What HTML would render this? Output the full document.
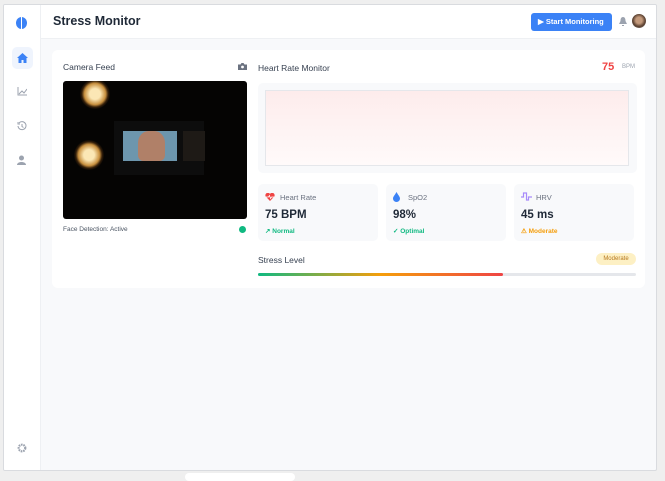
<!DOCTYPE html>
<html><head><style>
*{box-sizing:border-box;margin:0;padding:0}
body{width:665px;height:477px;background:#efefef;font-family:"Liberation Sans",sans-serif;position:relative;overflow:hidden;color:#1f2937}
.frame{position:absolute;left:3px;top:4px;width:654px;height:467px;background:#f8f9fb;border:1px solid #d9dbdf;border-radius:2px;overflow:hidden}
.side{position:absolute;left:0;top:0;width:37px;height:100%;background:#fff;border-right:1px solid #eef0f3}
.head{position:absolute;left:37px;top:0;right:0;height:34px;background:#fff;border-bottom:1px solid #eef0f3}
.card{position:absolute;left:48px;top:45px;width:593px;height:238px;background:#fff;border-radius:6px}
.t{position:absolute;font-size:8.5px;color:#374151}
.stat{position:absolute;top:134px;width:120px;height:57px;background:#f8f9fb;border-radius:5px}
.stat .l{position:absolute;left:22px;top:9px;font-size:7.5px;color:#6b7280}
.stat .v{position:absolute;left:7px;top:25px;font-size:11.5px;font-weight:bold;color:#1f2937}
.stat .s{position:absolute;left:7px;top:43px;font-size:6.5px;font-weight:bold}
</style></head><body>
<div class="frame">
 <div class="side">
  <div style="position:absolute;left:12px;top:12px;width:11px;height:12px;border-radius:50%;background:#3b82f6"></div>
  <div style="position:absolute;left:17px;top:12px;width:1px;height:12px;background:#fff"></div>
  <div style="position:absolute;left:8px;top:42px;width:21px;height:22px;border-radius:5px;background:#eff4fd"></div>
  <svg style="position:absolute;left:13px;top:48px" width="11" height="10" viewBox="0 0 11 10"><path d="M5.5 0L0 5h1.5v5h3V7h2v3h3V5H11z" fill="#3b82f6"/></svg>
  <svg style="position:absolute;left:13px;top:82px" width="10" height="9" viewBox="0 0 10 9"><path d="M1 0v8h9M2 7l3-3 2 2 3-4" stroke="#9ca3af" fill="none"/></svg>
  <svg style="position:absolute;left:13px;top:116px" width="10" height="10" viewBox="0 0 10 10"><path d="M2 2A4 4 0 1 1 1 5M1 1v2h2M5 3v2.5l1.5 1" stroke="#9ca3af" fill="none"/></svg>
  <svg style="position:absolute;left:13px;top:150px" width="9" height="10" viewBox="0 0 9 10"><circle cx="4.5" cy="3" r="2.5" fill="#9ca3af"/><path d="M0 10c0-4 9-4 9 0z" fill="#9ca3af"/></svg>
  <svg style="position:absolute;left:13px;top:438px" width="10" height="10" viewBox="0 0 10 10"><circle cx="5" cy="5" r="3.3" fill="none" stroke="#9ca3af" stroke-width="2.2" stroke-dasharray="1.6 0.8"/><circle cx="5" cy="5" r="1.2" fill="#fff"/></svg>
 </div>
 <div class="head">
  <div style="position:absolute;left:12px;top:9px;font-size:12.5px;font-weight:bold;color:#1f2937">Stress Monitor</div>
  <div style="position:absolute;left:490px;top:8px;width:81px;height:18px;background:#3b82f6;border-radius:3px;color:#fff;font-size:7.5px;font-weight:bold;line-height:18px;padding-left:7px">▶ Start Monitoring</div>
  <svg style="position:absolute;left:578px;top:12px" width="8" height="9" viewBox="0 0 8 9"><path d="M4 0C2 0 1.5 2 1.5 4L0 7h8L6.5 4C6.5 2 6 0 4 0zM3 8h2v1H3z" fill="#9ca3af"/></svg>
  <div style="position:absolute;left:591px;top:9px;width:14px;height:14px;border-radius:50%;background:radial-gradient(circle at 50% 45%,#c49a7c 30%,#5a4030 60%,#9a9a9a)"></div>
 </div>
 <div class="card">
  <div class="t" style="left:11px;top:12px">Camera Feed</div>
  <svg style="position:absolute;left:186px;top:13px" width="9" height="7" viewBox="0 0 9 7"><path d="M0 1.5h2.5L3.5 0h2l1 1.5H9V7H0z" fill="#6b7280"/><circle cx="4.5" cy="4" r="1.4" fill="#fff"/></svg>
  <div style="position:absolute;left:11px;top:31px;width:184px;height:138px;background:#050403;border-radius:3px;overflow:hidden">
   <div style="position:absolute;left:17px;top:-2px;width:30px;height:30px;border-radius:50%;background:radial-gradient(circle,#fbe7b5 25%,#c8903f 50%,rgba(120,70,20,.4) 62%,transparent 72%)"></div>
   <div style="position:absolute;left:11px;top:59px;width:30px;height:30px;border-radius:50%;background:radial-gradient(circle,#fbe7b5 25%,#c8903f 50%,rgba(120,70,20,.4) 62%,transparent 72%)"></div>
   <div style="position:absolute;left:51px;top:40px;width:90px;height:54px;background:#0d0d0d"></div>
   <div style="position:absolute;left:60px;top:50px;width:54px;height:30px;background:#6d96ad"></div>
   <div style="position:absolute;left:75px;top:50px;width:27px;height:30px;border-radius:40% 40% 20% 20%;background:#b08068"></div>
   <div style="position:absolute;left:120px;top:50px;width:22px;height:30px;background:#1e1a16"></div>
  </div>
  <div style="position:absolute;left:11px;top:176px;font-size:6.5px;color:#4b5563">Face Detection: Active</div>
  <div style="position:absolute;left:187px;top:176px;width:7px;height:7px;border-radius:50%;background:#10b981"></div>

  <div class="t" style="left:206px;top:13px">Heart Rate Monitor</div>
  <div style="position:absolute;left:550px;top:11px;font-size:11px;font-weight:bold;color:#ef4444">75</div>
  <div style="position:absolute;left:570px;top:14px;font-size:6px;color:#9ca3af">BPM</div>
  <div style="position:absolute;left:206px;top:33px;width:379px;height:90px;background:#f8f9fb;border-radius:5px"></div>
  <div style="position:absolute;left:213px;top:40px;width:364px;height:76px;border:1px solid #e5e7eb;background:linear-gradient(#fdecec,#fffafa)"></div>

  <div class="stat" style="left:206px"><svg style="position:absolute;left:7px;top:9px" width="10" height="8" viewBox="0 0 10 8"><path d="M5 8L.7 3.5A2.3 2.3 0 0 1 5 1a2.3 2.3 0 0 1 4.3 2.5z" fill="#ef4444"/><path d="M1 4h2.5l1-1.5 1 3 1-1.5H9" stroke="#fff" stroke-width=".8" fill="none"/></svg><div class="l">Heart Rate</div><div class="v">75 BPM</div><div class="s" style="color:#10b981">↗ Normal</div></div>
  <div class="stat" style="left:334px"><svg style="position:absolute;left:7px;top:8px" width="7" height="10" viewBox="0 0 7 10"><path d="M3.5 0C2 3 0 4.5 0 6.5a3.5 3.5 0 0 0 7 0C7 4.5 5 3 3.5 0z" fill="#3b82f6"/></svg><div class="l">SpO2</div><div class="v">98%</div><div class="s" style="color:#10b981">✓ Optimal</div></div>
  <div class="stat" style="left:462px"><svg style="position:absolute;left:7px;top:8px" width="11" height="9" viewBox="0 0 11 9"><path d="M0 5h2.5V1h3v7h2V5H11" stroke="#a78bfa" stroke-width="1.2" fill="none"/></svg><div class="l">HRV</div><div class="v">45 ms</div><div class="s" style="color:#f59e0b">⚠ Moderate</div></div>

  <div class="t" style="left:206px;top:205px">Stress Level</div>
  <div style="position:absolute;left:544px;top:203px;width:40px;height:12px;border-radius:6px;background:#fdf0c4;color:#b7791f;font-size:6px;text-align:center;line-height:12px">Moderate</div>
  <div style="position:absolute;left:206px;top:223px;width:378px;height:3px;border-radius:2px;background:#e5e7eb"></div>
  <div style="position:absolute;left:206px;top:223px;width:245px;height:3px;border-radius:2px;background:linear-gradient(90deg,#10b981,#f59e0b 50%,#ef4444)"></div>
 </div>
</div>
<div style="position:absolute;left:185px;top:473px;width:110px;height:8px;border-radius:5px;background:#fff"></div>
</body></html>
